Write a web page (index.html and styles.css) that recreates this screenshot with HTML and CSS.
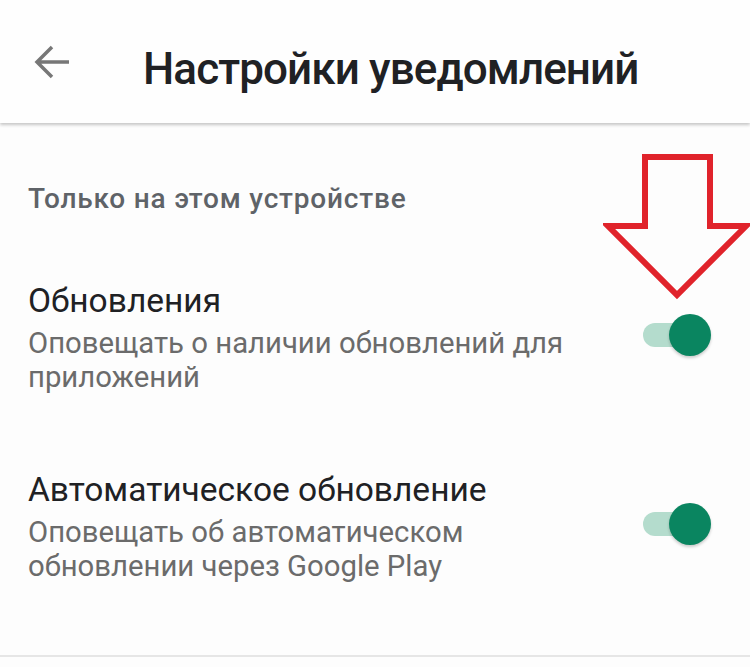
FILE: index.html
```html
<!DOCTYPE html>
<html lang="ru">
<head>
    <meta charset="UTF-8">
    <meta name="viewport" content="width=device-width, initial-scale=1.0">
    <title>Настройки уведомлений</title>
    <link rel="stylesheet" href="styles.css">
</head>
<body>

    <header class="app-bar">
        <svg class="back-icon" viewBox="0 0 36 34" width="36" height="34">
            <path d="M35 17H3M18 2L3 17l15 15" fill="none" stroke="#777" stroke-width="3.5"/>
        </svg>
        <h1 class="app-title">Настройки уведомлений</h1>
    </header>

    <main class="settings">
        <h2 class="section-title">Только на этом устройстве</h2>

        <!-- Updates -->
        <div class="setting-row row-first">
            <div class="setting-text">
                <div class="setting-name">Обновления</div>
                <div class="setting-desc">Оповещать о наличии обновлений для приложений</div>
            </div>
            <div class="switch on"><span class="thumb"></span></div>
        </div>

        <!-- Auto update -->
        <div class="setting-row">
            <div class="setting-text">
                <div class="setting-name">Автоматическое обновление</div>
                <div class="setting-desc">Оповещать об автоматическом обновлении через Google Play</div>
            </div>
            <div class="switch on"><span class="thumb"></span></div>
        </div>

        <div class="divider"></div>
    </main>

    <!-- red pointer drawn over the screenshot -->
    <svg class="pointer" viewBox="0 0 150 160" width="150" height="160">
        <polygon points="42,3 107,3 107,72 143,72 74,141 5,72 42,72" fill="none" stroke="#e0232b" stroke-width="6" stroke-linejoin="miter"/>
    </svg>

</body>
</html>
```

FILE: styles.css
```css
body {
    margin: 0;
    background-color: #fdfdfd;
    font-family: Roboto, "Noto Sans", sans-serif;
    position: relative;
    width: 750px;
    height: 667px;
    overflow: hidden;
}
.app-bar {
    display: flex;
    align-items: center;
    height: 123px;
    padding-left: 34px;
    background-color: #fefefe;
    box-shadow: 0 2px 3px rgba(0, 0, 0, 0.22);
    position: relative;
    z-index: 1;
}
.back-icon {
    flex: none;
}
.app-title {
    margin: 15px 0 0 73px;
    font-size: 44px;
    font-weight: 500;
    color: #202124;
    letter-spacing: -0.9px;
}
.settings {
    padding-top: 58px;
}
.section-title {
    margin: 0;
    padding-left: 28px;
    font-size: 28px;
    line-height: 36px;
    font-weight: 500;
    letter-spacing: 0.8px;
    color: #5f6368;
}
.setting-row {
    display: flex;
    align-items: flex-start;
    justify-content: space-between;
    padding: 0 39px 0 28px;
    margin-top: 76px;
}
.row-first {
    margin-top: 64px;
}
.setting-text {
    width: 570px;
}
.setting-name {
    font-size: 33.5px;
    line-height: 40px;
    color: #202124;
}
.setting-desc {
    margin-top: 5px;
    font-size: 29.3px;
    line-height: 34px;
    color: #6b6b6b;
}
.switch {
    position: relative;
    flex: none;
    width: 68px;
    height: 42px;
    margin-top: 33px;
}
.switch::before {
    content: "";
    position: absolute;
    left: 0;
    top: 9px;
    width: 57px;
    height: 24px;
    border-radius: 12px;
    background-color: #b4dccd;
}
.thumb {
    position: absolute;
    right: 0;
    top: 0;
    width: 42px;
    height: 42px;
    border-radius: 50%;
    background-color: #0a8560;
    box-shadow: 0 2px 3px rgba(0, 0, 0, 0.2);
}
.divider {
    margin-top: 72px;
    height: 2px;
    background-color: #e6e6e6;
}
.pointer {
    position: absolute;
    left: 603px;
    top: 154px;
}
```
